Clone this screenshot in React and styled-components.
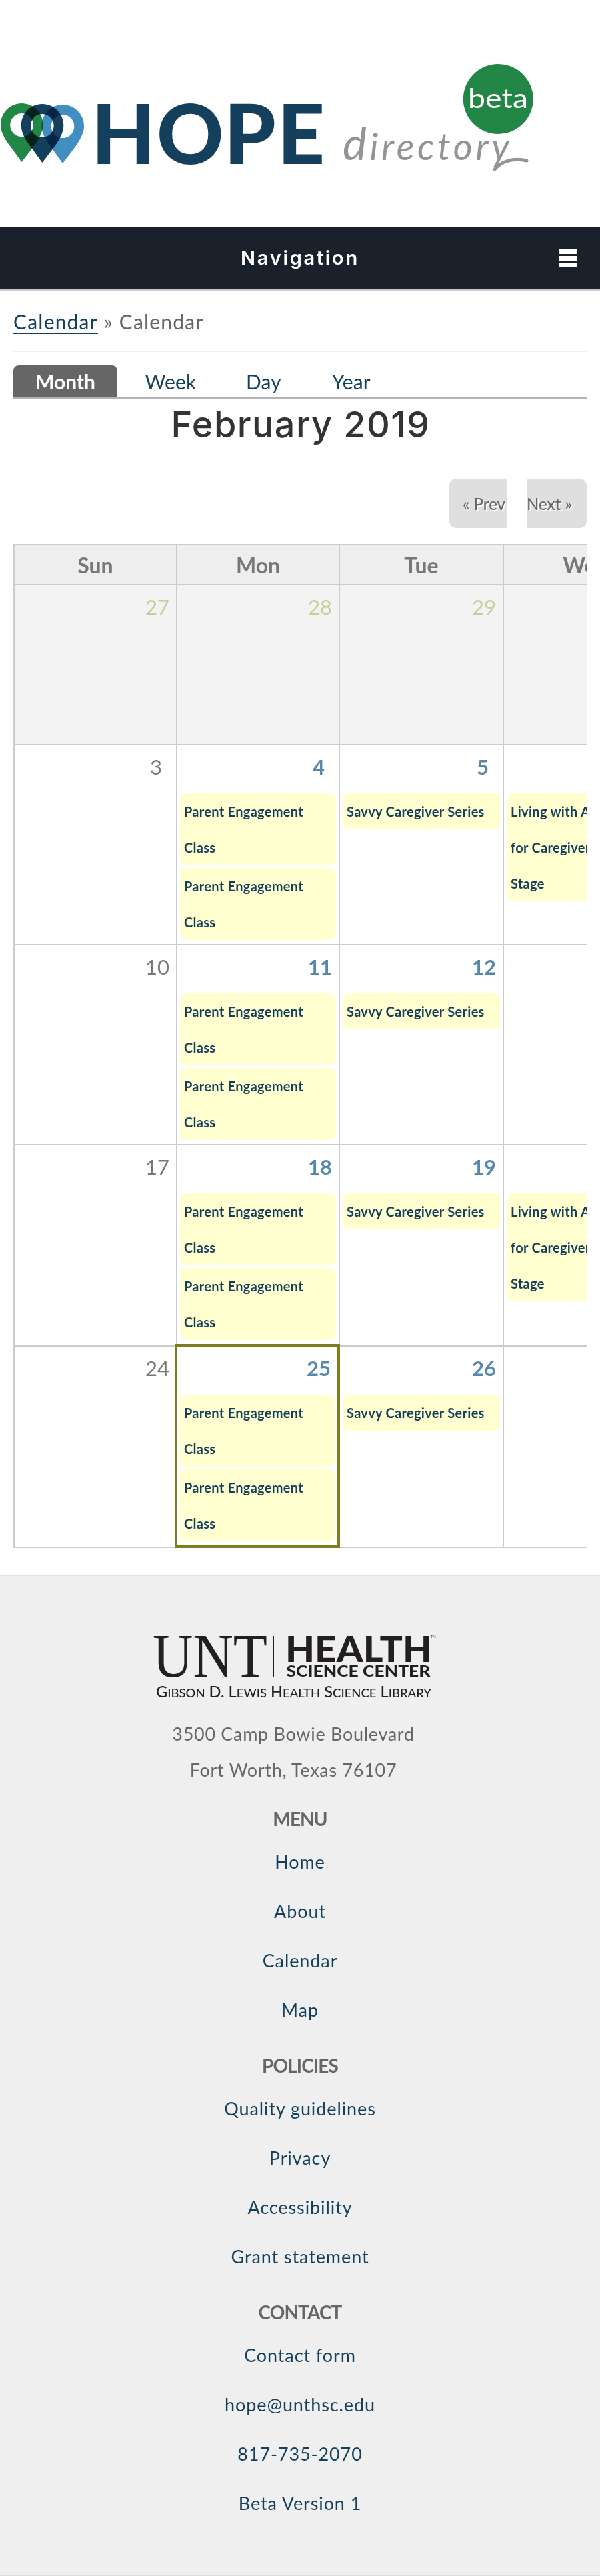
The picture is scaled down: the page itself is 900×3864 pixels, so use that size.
import React from 'react';
import styled, { createGlobalStyle } from 'styled-components';

const Global = createGlobalStyle`
  * { box-sizing: border-box; }
  body { margin: 0; background: #fff; color: #666; font-family: Lato, "Noto Sans", sans-serif; font-size: 27px; }
  a { color: #143f5d; text-decoration: none; }
`;

const Page = styled.div` width: 900px; height: 3864px; overflow: hidden; `;
const Header = styled.header` height: 340px; `;
const LogoSvg = styled.svg` display: block; `;
const Pin = styled.path` mix-blend-mode: multiply; fill-rule: evenodd; `;
const PinGroup = styled.g` isolation: isolate; `;

const NavBar = styled.nav`
  height: 96px; background: #1a212b; border-bottom: 2px solid #c9c9cf; color: #fff;
  display: grid; grid-template-columns: 1fr auto 1fr; align-items: center; padding: 0 34px;
`;
const NavTitle = styled.span` grid-column: 2; font: 600 29px/34px Inter, sans-serif; letter-spacing: 2.7px; `;
const Burger = styled.span`
  justify-self: end; width: 28px; height: 27px; display: flex; flex-direction: column; justify-content: space-between;
`;
const BurgerBar = styled.i` height: 7px; background: #fff; border-radius: 1px; `;

const Main = styled.main` margin: 0 20px; height: 1926px; `;
const Breadcrumb = styled.div`
  height: 92px; border-bottom: 2px solid #eee; padding-top: 26px; line-height: 40px;
  font-size: 30px; letter-spacing: 1.2px; margin-bottom: 20px;
`;
const CrumbLink = styled.a` border-bottom: 2px solid #143f5d; display: inline-block; line-height: 33px; `;
const Tabs = styled.div` display: flex; height: 50px; border-bottom: 2px solid #b3b3b3; `;
const Tab = styled.a`
  width: ${p => p.$w}px; height: 48px; line-height: 49px; text-align: center; font-size: 30px;
  letter-spacing: ${p => (p.$active ? 0 : 0.2)}px; font-weight: ${p => (p.$active ? 700 : 400)};
  ${p => p.$active && 'background: #666; color: #fff; border-radius: 8px 8px 0 0;'}
`;
const Title = styled.h1`
  margin: 8px 0 0; text-align: center; height: 62px; font: 500 54px/62px Inter, sans-serif; color: #333;
  letter-spacing: 1.4px; padding-left: 2px;
`;
const Pager = styled.div` display: flex; justify-content: flex-end; gap: 30px; margin: 50px 0 24px; `;
const PagerButton = styled.a`
  width: ${p => p.$w}px; height: 74px; line-height: 76px; background: #dfdfdf; color: #666; font-size: 24px; font-weight: 500;
  white-space: nowrap; overflow: hidden; text-shadow: 2px 2px 1px #fff;
  padding-left: ${p => (p.$next ? 0 : 20)}px; border-radius: ${p => (p.$next ? '0 10px 10px 0' : '10px 0 0 10px')};
`;

const CalendarClip = styled.section` overflow: hidden; height: 1506px; `;
const CalendarGrid = styled.div`
  display: grid; grid-template-columns: 244px 244px 246px 246px; grid-template-rows: 60px 240px 300px 300px 302px 302px;
  width: 982px; border-top: 2px solid #ccc; border-left: 2px solid #ccc;
`;
const DayHead = styled.div`
  background: #eee; border-right: 2px solid #ccc; border-bottom: 2px solid #ccc; color: #777;
  text-align: center; font-size: 32px; font-weight: 700; line-height: 59px;
`;
const Cell = styled.div`
  background: ${p => (p.$empty ? '#f3f3f3' : '#fff')}; border-right: 2px solid #ccc; border-bottom: 2px solid #ccc; padding: 0 4px;
  ${p => p.$today && 'border: 4px solid #7e7e21; margin: -4px 0 0 -4px;'}
`;
const DayNum = styled.div`
  height: 72px; padding: 7px ${p => (p.$single ? 17 : 6)}px 0 0; text-align: right; font-size: 31px; line-height: 50px;
  color: ${p => (p.$empty ? '#cccc99' : p.$link ? '#5588ac' : '#777')}; font-weight: ${p => (p.$link ? 700 : 400)};
`;
const Event = styled.a`
  display: block; background: #ffffcf; border-radius: 9px; margin-bottom: 4px; padding-left: 6px; font-size: 20px; font-weight: 700;
  line-height: 54px; letter-spacing: 0.3px; white-space: pre-line;
`;

const Footer = styled.footer`
  height: 1502px; background: #efefef; border-top: 2px solid #e0e0e0; text-align: center; border-bottom: 2px solid #ddd;
`;
const FooterLogo = styled(LogoSvg)` margin: 0 auto; `;
const Address = styled.p` margin: 0 0 20px; line-height: 54px; font-size: 27px; letter-spacing: 0.7px; padding-right: 20px; `;
const FooterHead = styled.h2` margin: 0; height: 64px; line-height: 53px; font-size: 28px; font-weight: 700; letter-spacing: -0.9px; `;
const FooterList = styled.div` display: flex; flex-direction: column; margin-bottom: 10px; `;
const FooterLink = styled.a` height: 74px; line-height: 53px; font-size: 27px; letter-spacing: 0.9px; `;

const pin = (cx, top) =>
  `M${cx} ${top}c17.7 0 32 14.3 32 32c0 8-3 14-6 20c-4 7-6 10-9.500 14.500L${cx} ${top + 88}L${cx - 15.5} ${top + 66.5}c-3.500-4.500-6-7.500-10-14.500c-3-6-6-12-6-20c0-17.700 14-32 31.500-32Z` +
  `M${cx} ${top + 15}a17.300 17.500 0 1 0 .01 0Z`;

const EVENTS = { mon: ['Parent Engagement\nClass', 'Parent Engagement\nClass'], tue: ['Savvy Caregiver Series'], wed: ['Living with Alzheimer’s\nfor Caregivers: Early\nStage'] };
const WEEKS = [
  { days: ['27', '28', '29', ''], empty: true },
  { days: ['3', '4', '5', ''], wed: true },
  { days: ['10', '11', '12', ''] },
  { days: ['17', '18', '19', ''], wed: true },
  { days: ['24', '25', '26', ''], today: 1 },
];
const FOOTER = [
  ['MENU', ['Home', 'About', 'Calendar', 'Map']],
  ['POLICIES', ['Quality guidelines', 'Privacy', 'Accessibility', 'Grant statement']],
  ['CONTACT', ['Contact form', 'hope@unthsc.edu', '817-735-2070', 'Beta Version 1']],
];

function eventsFor(week, col) {
  if (week.empty || col === 0) return [];
  if (col === 1) return EVENTS.mon;
  if (col === 2) return EVENTS.tue;
  return week.wed ? EVENTS.wed : [];
}

export default function App() {
  return (
    <Page>
      <Global />
      <Header>
        <LogoSvg width="900" height="340" viewBox="0 0 900 340">
          <PinGroup>
            <Pin d={pin(32.5, 155)} fill="#228746" />
            <Pin d={pin(63.300, 156)} fill="#143f5d" />
            <Pin d={pin(94, 157)} fill="#418fc1" />
          </PinGroup>
          <text x="137 235 336 416" y="245.500" fill="#143f5d" fontFamily="Lato" fontWeight="900" fontSize="124">HOPE</text>
          <text x="514" y="240" fontFamily="Lato" fontStyle="italic" fontWeight="400" fontSize="56" fill="#939498" textLength="250">
            <tspan fontSize="68">d</tspan>irectory
          </text>
          <path d="M742 254C752 242 770 236 790 241" fill="none" stroke="#939498" strokeWidth="5" strokeLinecap="round" />
          <circle cx="747.300" cy="148.500" r="52.500" fill="#228746" />
          <text x="702" y="162" fontFamily="Lato" fontWeight="400" fontSize="40" fill="#fff" textLength="90" lengthAdjust="spacingAndGlyphs">beta</text>
        </LogoSvg>
      </Header>
      <NavBar>
        <NavTitle>Navigation</NavTitle>
        <Burger><BurgerBar /><BurgerBar /><BurgerBar /></Burger>
      </NavBar>
      <Main>
        <Breadcrumb><CrumbLink>Calendar</CrumbLink> » Calendar</Breadcrumb>
        <Tabs>
          <Tab $w={156} $active>Month</Tab>
          <Tab $w={160}>Week</Tab>
          <Tab $w={119}>Day</Tab>
          <Tab $w={144}>Year</Tab>
        </Tabs>
        <Title>February 2019</Title>
        <Pager>
          <PagerButton $w={86}>« Prev</PagerButton>
          <PagerButton $w={90} $next>Next »</PagerButton>
        </Pager>
        <CalendarClip>
          <CalendarGrid>
            {['Sun', 'Mon', 'Tue', 'Wed'].map(d => <DayHead key={d}>{d}</DayHead>)}
            {WEEKS.map((w, r) => w.days.map((d, c) => (
              <Cell key={`${r}-${c}`} $empty={w.empty} $today={w.today === c}>
                <DayNum $empty={w.empty} $link={!w.empty && c > 0} $single={d.length === 1}>{d}</DayNum>
                {eventsFor(w, c).map((e, i) => <Event key={i}>{e}</Event>)}
              </Cell>
            )))}
          </CalendarGrid>
        </CalendarClip>
      </Main>
      <Footer>
        <FooterLogo width="460" height="210" viewBox="220 2364 460 210" fill="#231f20">
          <text x="229" y="2515" fontFamily="Liberation Serif" fontSize="93" textLength="172" lengthAdjust="spacingAndGlyphs">UNT</text>
          <path d="M410.500 2454V2515" stroke="#231f20" />
          <text x="428" y="2493" fontFamily="Lato" fontWeight="900" fontSize="54" textLength="220" lengthAdjust="spacingAndGlyphs">HEALTH</text>
          <text x="429.500" y="2515" fontFamily="Lato" fontWeight="900" fontSize="22" textLength="216" lengthAdjust="spacingAndGlyphs">SCIENCE CENTER</text>
          <text x="646" y="2457" fontFamily="Lato" fontSize="5">TM</text>
          <text x="234" y="2546" fontFamily="Lato" fontWeight="500" fontSize="23" textLength="413" lengthAdjust="spacingAndGlyphs">
            G<tspan fontSize="18">IBSON</tspan> D. L<tspan fontSize="18">EWIS</tspan> H<tspan fontSize="18">EALTH</tspan> S<tspan fontSize="18">CIENCE</tspan> L<tspan fontSize="18">IBRARY</tspan>
          </text>
        </FooterLogo>
        <Address>3500 Camp Bowie Boulevard<br />Fort Worth, Texas 76107</Address>
        {FOOTER.map(([head, links]) => (
          <React.Fragment key={head}>
            <FooterHead>{head}</FooterHead>
            <FooterList>{links.map(l => <FooterLink key={l}>{l}</FooterLink>)}</FooterList>
          </React.Fragment>
        ))}
      </Footer>
    </Page>
  );
}
